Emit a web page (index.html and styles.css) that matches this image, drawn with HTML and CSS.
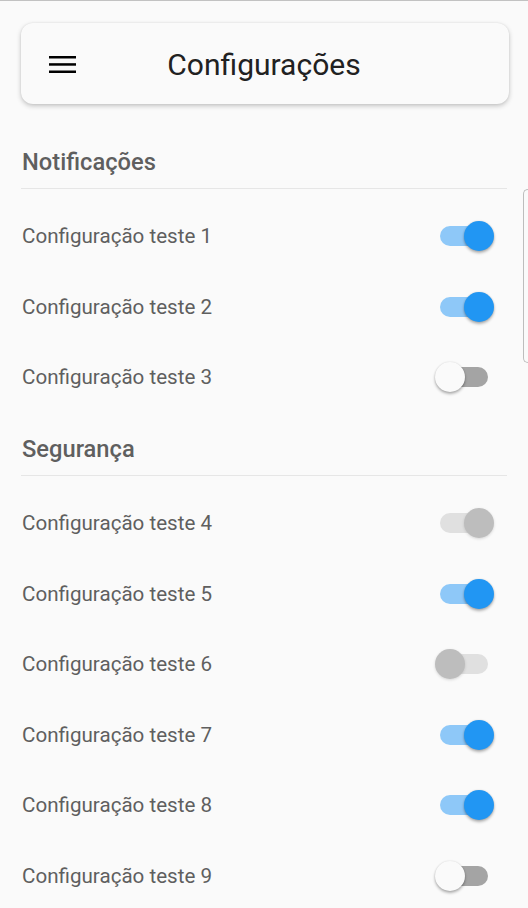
FILE: index.html
```html
<!DOCTYPE html>
<html lang="pt">
<head>
<meta charset="utf-8">
<link rel="stylesheet" href="styles.css">
</head>
<body>
<div class="page">
  <header class="appbar">
    <button class="menu" aria-label="menu">
      <svg width="27" height="18" viewBox="0 0 27 18"><rect x="0" y="1" width="27" height="2.5" fill="#000"/><rect x="0" y="8.2" width="27" height="2.5" fill="#000"/><rect x="0" y="15.5" width="27" height="2.5" fill="#000"/></svg>
    </button>
    <h1 class="title">Configurações</h1>
  </header>

  <section class="section first">
    <h2 class="section-title">Notificações</h2>
    <ul class="list">
      <li class="row"><span>Configuração teste 1</span><span class="switch on"><span class="thumb"></span></span></li>
      <li class="row"><span>Configuração teste 2</span><span class="switch on"><span class="thumb"></span></span></li>
      <li class="row"><span>Configuração teste 3</span><span class="switch off"><span class="thumb"></span></span></li>
    </ul>
  </section>

  <section class="section">
    <h2 class="section-title">Segurança</h2>
    <ul class="list">
      <li class="row"><span>Configuração teste 4</span><span class="switch on disabled"><span class="thumb"></span></span></li>
      <li class="row"><span>Configuração teste 5</span><span class="switch on"><span class="thumb"></span></span></li>
      <li class="row"><span>Configuração teste 6</span><span class="switch off disabled"><span class="thumb"></span></span></li>
      <li class="row"><span>Configuração teste 7</span><span class="switch on"><span class="thumb"></span></span></li>
      <li class="row"><span>Configuração teste 8</span><span class="switch on"><span class="thumb"></span></span></li>
      <li class="row"><span>Configuração teste 9</span><span class="switch off"><span class="thumb"></span></span></li>
    </ul>
  </section>
  <div class="edge-panel"></div>
</div>
</body>
</html>
```

FILE: styles.css
```css
* { box-sizing: border-box; }
html, body {
  margin: 0;
  padding: 0;
  background: #fafafa;
  overflow: hidden;
  height: 100%;
}
body {
  font-family: Roboto, "Noto Sans", "Liberation Sans", sans-serif;
  border-top: 1px solid #c2c2c2;
}
.page {
  position: relative;
  padding: 22px 19px 0 21px;
}
.appbar {
  height: 81px;
  background: #fafafa;
  border-radius: 12px;
  box-shadow: 0 2px 5px rgba(0,0,0,0.22), 0 0 2px rgba(0,0,0,0.08);
  display: flex;
  align-items: center;
  position: relative;
}
.menu {
  border: 0;
  background: none;
  padding: 0;
  margin-left: 28px;
  margin-top: 1px;
  width: 27px;
  height: 18px;
  display: flex;
}
.title {
  position: absolute;
  left: 0;
  right: 0;
  top: 0;
  bottom: 0;
  display: flex;
  align-items: center;
  justify-content: center;
  margin: 0;
  padding-top: 2px;
  padding-right: 2px;
  font-size: 30px;
  font-weight: 400;
  color: #212121;
  pointer-events: none;
}
.section {
  padding-top: 22px;
}
.section.first { padding-top: 44px; }
.section-title {
  margin: 0;
  font-size: 23.7px;
  line-height: 28px;
  font-weight: 500;
  color: #5f5f5f;
  padding: 0 0 12px 1px;
  border-bottom: 1px solid #e6e6e6;
  margin-right: 2px;
}
.list {
  list-style: none;
  margin: 0;
  padding: 12px 0 0 0;
}
.row {
  height: 70.6px;
  display: flex;
  align-items: center;
  justify-content: space-between;
  font-size: 20.6px;
  color: #5f5f5f;
  padding-left: 1px;
}
.switch {
  position: relative;
  width: 48px;
  height: 20px;
  border-radius: 10px;
  margin-right: 21px;
}
.switch .thumb {
  position: absolute;
  top: -5px;
  width: 30px;
  height: 30px;
  border-radius: 50%;
  box-shadow: 0 2px 3px rgba(0,0,0,0.3), 0 0 2px rgba(0,0,0,0.12);
}
.switch.on { background: #8ec8f8; }
.switch.on .thumb { left: 24px; background: #2196f3; }
.switch.off { background: #a4a4a4; }
.switch.off .thumb { left: -5px; background: #fafafa; }
.switch.disabled { background: #e0e0e0; }
.switch.disabled .thumb { background: #bdbdbd; box-shadow: 0 1px 3px rgba(0,0,0,0.15); }
.edge-panel {
  position: absolute;
  left: 523px;
  top: 188px;
  width: 5px;
  height: 174px;
  border: 1px solid #bdbdbd;
  border-right: 0;
  border-radius: 9px 0 0 9px;
}
```
